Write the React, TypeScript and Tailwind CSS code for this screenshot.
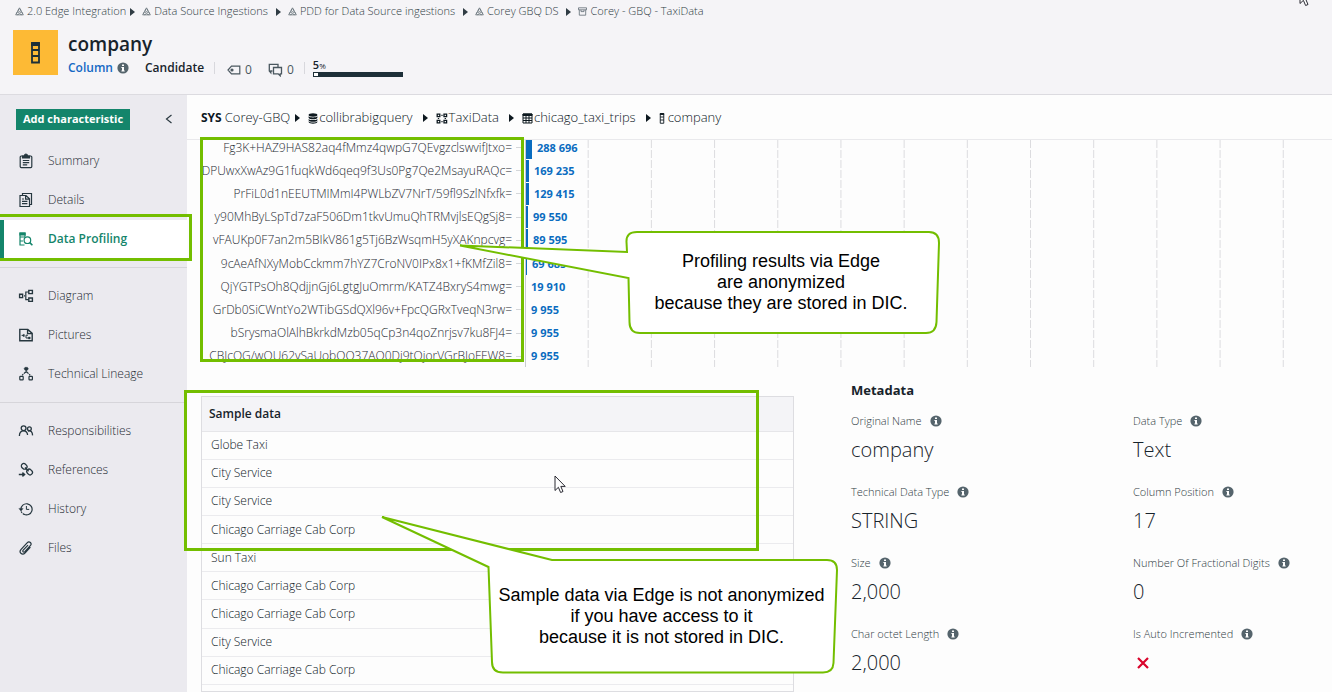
import type { ReactNode } from 'react'
import clsx from 'clsx'

/* ---------- data ---------- */

const profile = [
    { hash: 'Fg3K+HAZ9HAS82aq4fMmz4qwpG7QEvgzclswvifJtxo=', count: 288696 },
    { hash: 'DPUwxXwAz9G1fuqkWd6qeq9f3Us0Pg7Qe2MsayuRAQc=', count: 169235 },
    { hash: 'PrFiL0d1nEEUTMIMmI4PWLbZV7NrT/59fl9SzlNfxfk=', count: 129415 },
    { hash: 'y90MhByLSpTd7zaF506Dm1tkvUmuQhTRMvjlsEQgSj8=', count: 99550 },
    { hash: 'vFAUKp0F7an2m5BIkV861g5Tj6BzWsqmH5yXAKnpcvg=', count: 89595 },
    { hash: '9cAeAfNXyMobCckmm7hYZ7CroNV0IPx8x1+fKMfZil8=', count: 69685 },
    { hash: 'QjYGTPsOh8QdjjnGj6LgtgJuOmrm/KATZ4BxryS4mwg=', count: 19910 },
    { hash: 'GrDb0SiCWntYo2WTibGSdQXl96v+FpcQGRxTveqN3rw=', count: 9955 },
    { hash: 'bSrysmaOlAlhBkrkdMzb05qCp3n4qoZnrjsv7ku8FJ4=', count: 9955 },
    { hash: 'CBJcQG/wQU62vSaUobQO37AQ0Dj9tQjorVGrBJoFEW8=', count: 9955 },
]

const samples = [
    'Globe Taxi',
    'City Service',
    'City Service',
    'Chicago Carriage Cab Corp',
    'Sun Taxi',
    'Chicago Carriage Cab Corp',
    'Chicago Carriage Cab Corp',
    'City Service',
    'Chicago Carriage Cab Corp',
]

const metadata = [
    { label: 'Original Name', value: 'company' },
    { label: 'Data Type', value: 'Text' },
    { label: 'Technical Data Type', value: 'STRING' },
    { label: 'Column Position', value: '17' },
    { label: 'Size', value: '2,000' },
    { label: 'Number Of Fractional Digits', value: '0' },
    { label: 'Char octet Length', value: '2,000' },
    { label: 'Is Auto Incremented', value: false },
]

const formatCount = (n: number) => String(n).replace(/\B(?=(\d{3})+$)/g, ' ')

/* ---------- icons ---------- */

function Icon({ children, className, size = 16 }: { children: ReactNode; className?: string; size?: number }) {
    return (
        <svg
            viewBox={`0 0 ${size} ${size}`}
            width={size}
            height={size}
            fill="none"
            stroke="currentColor"
            strokeWidth="1.2"
            className={clsx('shrink-0', className)}
            aria-hidden="true"
        >
            {children}
        </svg>
    )
}

const Arrow = ({ className }: { className?: string }) => (
    <svg viewBox="0 0 5 8" width="5" height="8" fill="currentColor" className={clsx('shrink-0', className)} aria-hidden="true">
        <path d="M0 0 5 4 0 8z" />
    </svg>
)

const InfoIcon = () => (
    <svg viewBox="0 0 12 12" width="12" height="12" className="shrink-0" aria-hidden="true">
        <circle cx="6" cy="6" r="5.6" fill="#55646c" />
        <path d="M5 2.4h2v1.7H5zM4.4 5H7v3.6h.7v1H4.4v-1H5V6h-.6z" fill="#fff" />
    </svg>
)

const CommunityIcon = () => (
    <svg viewBox="0 0 9 9" width="9" height="9" fill="none" stroke="#5f6b73" strokeWidth=".7" className="shrink-0" aria-hidden="true">
        <path d="M4.5.8 8.4 7.9H.6z" />
        <circle cx="4.5" cy="3.2" r="1.3" />
        <circle cx="2.8" cy="6.4" r="1.3" />
        <circle cx="6.2" cy="6.4" r="1.3" />
    </svg>
)

const DomainIcon = () => (
    <svg viewBox="0 0 9 9" width="9" height="9" fill="none" stroke="#5f6b73" strokeWidth=".8" className="shrink-0" aria-hidden="true">
        <path d="M.5.8h8v2h-8zM1.3 2.8v5.4h6.4V2.8M3 3v1.6h3V3" />
    </svg>
)

const icons = {
    summary: (
        <Icon>
            <rect x="2.2" y="3" width="11.6" height="11.6" rx="1" />
            <path d="M4.5 5V3h2c0-1.2.6-2 1.5-2s1.5.8 1.5 2h2v2z" fill="currentColor" />
            <path d="M4.8 7.5h6.4M4.8 9.7h6.4M4.8 11.9h4.4" />
        </Icon>
    ),
    details: (
        <Icon>
            <path d="M4.5 3V1.5h9v11H12" />
            <path d="M2 3.5h6l3.5 3.3v7.7H2zM7.6 3.6v3.6h3.8M4 7h2M4 9.3h5.4M4 11.7h5.4" />
        </Icon>
    ),
    profiling: (
        <Icon>
            <path d="M6.5 14H2V2h5v3.5M2 6h5M2 10h3" />
            <path d="M2 2h5v2H2z" fill="currentColor" />
            <circle cx="9.4" cy="9.2" r="3.3" />
            <path d="m11.8 11.6 2.6 2.7" strokeWidth="1.6" />
        </Icon>
    ),
    diagram: (
        <Icon>
            <path d="M1.6 6.2h3v3.4h-3zM10.8 2.4h3.6v3.2h-3.6zM10.8 10h3.6v3.4h-3.6z" strokeWidth="1.4" />
            <path d="M6 7.9h1M10.6 4H7.8v7.7h2.8" />
        </Icon>
    ),
    pictures: (
        <Icon>
            <path d="M1.8 2.4h8l4.4 4v7.4H1.8zM9.6 2.6v4h4.4" strokeWidth="1.4" />
            <path d="M3.6 8.4h2.2M8 8.2v2.8h3M8 8.2h2" strokeWidth="1" />
            <path d="M5 7.4h1.4v2H5zM10.4 10h1.8v2h-1.8z" fill="currentColor" strokeWidth=".4" />
        </Icon>
    ),
    lineage: (
        <Icon>
            <path d="M6 2.7 7 1.3h2.4l1 1.4-1 1.5H7z" fill="currentColor" strokeWidth=".4" />
            <path d="M8.2 4v2.4M7.6 6 4.2 9.2M8.8 6l3.4 3.2" strokeDasharray="2.4 .8" />
            <rect x="1.8" y="10.4" width="3.4" height="3.4" rx=".6" />
            <rect x="11" y="10.4" width="3.4" height="3.4" rx=".6" />
        </Icon>
    ),
    people: (
        <Icon>
            <circle cx="5.6" cy="5.2" r="2.4" strokeWidth="1.3" />
            <path d="M1.4 13c0-3.2 1.8-5.2 4.2-5.2S9.4 9.6 9.6 12" strokeWidth="1.3" />
            <circle cx="11.4" cy="5.8" r="1.9" strokeWidth="1.3" />
            <path d="M10 8.2c2.8-1.2 4.4.6 4.6 4.2" strokeWidth="1.3" />
        </Icon>
    ),
    references: (
        <Icon>
            <rect x="3.8" y="1.4" width="4.8" height="6" rx="2.4" transform="rotate(-45 6.2 4.4)" strokeWidth="1.3" />
            <rect x="9.2" y="7" width="4.8" height="6" rx="2.4" transform="rotate(-45 11.6 10)" strokeWidth="1.3" />
            <path d="m7 5.6 3.6 3.6M.8 12.5h5.4M4.4 10.6l2.2 1.9-2.2 1.9" strokeWidth="1.4" />
        </Icon>
    ),
    history: (
        <Icon>
            <path d="M2.9 8.4a5.6 5.6 0 1 1 3 4.9" />
            <path d="M3.2 10.4a5.6 5.6 0 0 0 3 3" strokeDasharray="1.6 1" />
            <path d="M.8 7.4h4.4L3 10.2z" fill="currentColor" strokeWidth=".3" />
            <path d="M8.4 5v3.4h2.8" strokeWidth="1" />
        </Icon>
    ),
    files: (
        <Icon>
            <path d="M12.4 7.2 7.2 12.8c-1.4 1.5-3.2 1.5-4.3.5-1.1-1.1-1-2.7.2-4l6-6.5c1-1 2.4-1.1 3.3-.3.9.9.9 2.1-.1 3.2l-5.5 5.9c-.6.6-1.3.6-1.7.2-.5-.5-.4-1.1.1-1.7L10 5.2" />
        </Icon>
    ),
}

const DatabaseIcon = () => (
    <svg viewBox="0 0 10 11" width="10" height="11" fill="currentColor" className="shrink-0" aria-hidden="true">
        <ellipse cx="5" cy="2" rx="4.4" ry="1.7" />
        <path d="M.6 3.2c1 1.6 7.8 1.6 8.8 0v1.6c-.6 2-8.2 2-8.8 0zM.6 5.9c1 1.6 7.8 1.6 8.8 0v1.3c-.6 2-8.2 2-8.8 0zM.6 8.3c1 1.6 7.8 1.6 8.8 0v.8c-.6 2.2-8.2 2.2-8.8 0z" />
    </svg>
)

const SchemaIcon = () => (
    <svg viewBox="0 0 12 11" width="12" height="11" fill="none" stroke="currentColor" strokeWidth="1.3" className="shrink-0" aria-hidden="true">
        <path d="M1.2 1.2h2.6v2.4H1.2zM8 1.2h2.6v2.4H8zM1.2 7.4h2.6v2.4H1.2zM8 7.4h2.6v2.4H8z" />
        <path d="M5.4 2.4h1.2M5.4 8.6h1.2M2.5 4.9v1.2M9.3 4.9v1.2" />
    </svg>
)

const TableIcon = () => (
    <svg viewBox="0 0 11 11" width="11" height="11" fill="none" stroke="currentColor" className="shrink-0" aria-hidden="true">
        <path d="M1 1h9v9H1zM1 5h9M1 7.5h9M4 2v8M7 2v8" />
        <path d="M1 1h9v1.5H1z" fill="currentColor" />
    </svg>
)

const ColumnIcon = ({ className }: { className?: string }) => (
    <svg viewBox="0 0 9 22" fill="none" stroke="currentColor" strokeWidth="1.8" className={clsx('shrink-0', className)} aria-hidden="true">
        <path d="M1 1.5h7v19H1zM1 8h7M1 14h7" />
        <path d="M1 1h7v2H1z" fill="currentColor" />
    </svg>
)

/* ---------- header ---------- */

const crumbs = [
    { text: '2.0 Edge Integration', icon: <CommunityIcon /> },
    { text: 'Data Source Ingestions', icon: <CommunityIcon /> },
    { text: 'PDD for Data Source ingestions', icon: <CommunityIcon /> },
    { text: 'Corey GBQ DS', icon: <CommunityIcon /> },
    { text: 'Corey - GBQ - TaxiData', icon: <DomainIcon /> },
]

function Header() {
    return (
        <header className="h-[95px] shrink-0 border-b border-[#dcdbe0] bg-[#f5f4f7]">
            <nav className="flex h-[23px] items-center pl-[15px] text-[11px] font-light text-[#303c44]">
                {crumbs.map((crumb, i) => (
                    <div key={crumb.text} className="flex items-center">
                        {i > 0 && <Arrow className={clsx('mr-[7px]', i === 1 ? 'ml-1' : 'ml-2')} />}
                        <a href="#" className="flex items-center gap-[3px] whitespace-nowrap">
                            {crumb.icon}
                            {crumb.text}
                        </a>
                    </div>
                ))}
            </nav>
            <div className="flex gap-2.5 pt-[7px] pl-[13px]">
                <div className="flex size-[45px] items-center justify-center bg-[#fdba35] text-[#1d2f38]">
                    <ColumnIcon className="h-[22px] w-[9px]" />
                </div>
                <div>
                    <h1 className="text-[19px] leading-7 font-semibold text-[#17232b]">company</h1>
                    <div className="flex h-5 items-center text-xs font-semibold text-[#17232b]">
                        <a href="#" className="mr-1 text-[#1468c4]">Column</a>
                        <InfoIcon />
                        <span className="ml-4">Candidate</span>
                        <span className="ml-2.5 h-3 w-px bg-[#d8d8dd]" />
                        <span className="ml-3 flex items-center gap-1 pt-1 font-normal text-[#4a575f]">
                            <svg viewBox="0 0 14 10" width="14" height="10" fill="none" stroke="currentColor" strokeWidth="1.2" aria-hidden="true">
                                <path d="M4.5 1.2h8.3v7.6H4.5L1 5z" />
                                <circle cx="5" cy="5" r="1" fill="currentColor" />
                            </svg>
                            0
                        </span>
                        <span className="ml-4 flex items-center gap-1 pt-1 font-normal text-[#4a575f]">
                            <svg viewBox="0 0 15 14" width="15" height="14" fill="none" stroke="currentColor" strokeWidth="1.3" aria-hidden="true">
                                <path d="M4.5 8H2.8v1.8L1.3 8V1.3H10V4" />
                                <path d="M5.5 4.5h8v6.3h-1.3v2l-2-2H5.5z" />
                            </svg>
                            0
                        </span>
                        <span className="ml-2.5 h-3 w-px bg-[#d8d8dd]" />
                        <div className="ml-2 w-[90px]">
                            <div className="text-[11px] leading-3">
                                5<span className="text-[8px] font-normal">%</span>
                            </div>
                            <div className="h-[5px] border border-[#1d2f38] bg-[#1d2f38]">
                                <div className="h-full bg-white" style={{ width: '5%' }} />
                            </div>
                        </div>
                    </div>
                </div>
            </div>
        </header>
    )
}

/* ---------- sidebar ---------- */

const menu = [
    [
        { label: 'Summary', icon: icons.summary },
        { label: 'Details', icon: icons.details },
        { label: 'Data Profiling', icon: icons.profiling, active: true },
    ],
    [
        { label: 'Diagram', icon: icons.diagram },
        { label: 'Pictures', icon: icons.pictures },
        { label: 'Technical Lineage', icon: icons.lineage },
    ],
    [
        { label: 'Responsibilities', icon: icons.people },
        { label: 'References', icon: icons.references },
        { label: 'History', icon: icons.history },
        { label: 'Files', icon: icons.files },
    ],
]

function Sidebar() {
    return (
        <aside className="w-[187px] shrink-0 bg-[#ebeaef]">
            <div className="flex h-[47px] items-center justify-between pt-0.5 pr-3 pl-4">
                <button className="h-[21px] bg-[#14856b] px-[7px] text-[11px] font-bold whitespace-nowrap text-white">Add characteristic</button>
                <button aria-label="Collapse" className="text-[#2b3940]">
                    <svg viewBox="0 0 12 12" width="12" height="12" fill="none" stroke="currentColor" strokeWidth="1.2" aria-hidden="true">
                        <path d="M8.5 1 3.5 5l5 4" />
                    </svg>
                </button>
            </div>
            {menu.map((group, i) => (
                <ul key={i} className={clsx('flex flex-col gap-px', i > 0 && 'mt-[9px] border-t border-[#d6d5da] pt-[9px]')}>
                    {group.map((item: { label: string; icon: ReactNode; active?: boolean }) => (
                        <li key={item.label}>
                            <a
                                href="#"
                                className={clsx(
                                    'flex h-[38px] items-center gap-3.5 border-l-4 pl-[14px] text-xs',
                                    item.active ? 'border-[#14856b] bg-white font-semibold text-[#14856b]' : 'border-transparent font-light text-[#1f2b33]'
                                )}
                            >
                                <span className={item.active ? '' : 'text-[#26373f]'}>{item.icon}</span>
                                {item.label}
                            </a>
                        </li>
                    ))}
                </ul>
            ))}
        </aside>
    )
}

/* ---------- main ---------- */

const path = [
    { text: 'collibrabigquery', icon: <DatabaseIcon /> },
    { text: 'TaxiData', icon: <SchemaIcon /> },
    { text: 'chicago_taxi_trips', icon: <TableIcon /> },
    { text: 'company', icon: <ColumnIcon className="mr-0.5 h-[11px] w-[6px]" /> },
]

function PathBar() {
    return (
        <nav className="flex h-[45px] items-center border-b border-[#e9e9ec] pt-0.5 pl-3.5 text-[13px] font-light text-[#0d181f]">
            <span className="mr-[3px] text-xs font-bold">SYS</span>
            <a href="#">Corey-GBQ</a>
            {path.map((part, i) => (
                <div key={part.text} className="flex items-center">
                    <Arrow className={clsx('mr-2', i === 0 ? 'ml-[5px]' : 'ml-2.5')} />
                    <a href="#" className="flex items-center gap-px">
                        {part.icon}
                        {part.text}
                    </a>
                </div>
            ))}
        </nav>
    )
}

function Chart() {
    return (
        <section className="relative h-[227px] shrink-0 overflow-hidden">
            <div className="absolute inset-y-0 right-0 left-[338px]">
                <svg width="100%" height="100%" aria-hidden="true">
                    <line x1="0" x2="0" y1="0" y2="100%" stroke="#c9ccd0" strokeWidth="2" />
                    {Array.from({ length: 12 }, (_, i) => {
                        const x = `${(i + 1) * 7.83}%`
                        return <line key={i} x1={x} x2={x} y1="0" y2="100%" stroke="#dcdcdf" strokeDasharray="8 2" />
                    })}
                </svg>
            </div>
            <ol className="relative -mt-1 grid h-[232px] auto-rows-fr">
                {profile.map((row, i) => (
                    <li key={i} className="flex items-center">
                        <span className="w-[325px] shrink-0 text-right text-xs leading-3 font-light whitespace-nowrap text-[#1f2b33]">{row.hash}</span>
                        <span className="mx-1 h-px w-[6px] bg-[#d5d7da]" />
                        <span className="h-[22px] bg-[#0a6cc0]" style={{ width: Math.round(row.count / 50000) }} />
                        <span className="ml-[5px] text-[11px] leading-3 font-bold text-[#0a6cc0]">{formatCount(row.count)}</span>
                    </li>
                ))}
            </ol>
        </section>
    )
}

function SampleTable() {
    return (
        <div className="flex w-[593px] shrink-0 flex-col border border-[#dddde1]">
            <table className="h-[288px] w-full shrink-0 border-collapse text-left text-xs">
                <thead>
                    <tr className="h-[34px] border-b border-[#e6e6e9] bg-[#f4f4f7]">
                        <th className="px-[7px] py-0 font-semibold text-[#17232b]">Sample data</th>
                    </tr>
                </thead>
                <tbody className="font-light text-[#0d181f]">
                    {samples.map((name, i) => (
                        <tr key={i} className="border-b border-[#ebebee]">
                            <td className="px-[9px] py-0">{name}</td>
                        </tr>
                    ))}
                </tbody>
            </table>
        </div>
    )
}

function Metadata() {
    return (
        <section className="min-w-0 flex-1">
            <h2 className="-mt-4 text-[13px] leading-5 font-bold text-[#17232b]">Metadata</h2>
            <dl className="mt-3 grid grid-cols-[282px_1fr]">
                {metadata.map(item => (
                    <div key={item.label} className="h-[71px]">
                        <dt className="flex h-[18px] items-center gap-2 text-[11px] font-light whitespace-nowrap text-[#303c44]">
                            {item.label}
                            <InfoIcon />
                        </dt>
                        <dd className="flex h-10 items-center text-xl font-light text-[#17232b]">
                            {item.value || (
                                <svg viewBox="0 0 12 12" width="12" height="12" stroke="#d9042b" strokeWidth="2.2" className="ml-1" role="img" aria-label="No">
                                    <path d="m1 1 10 10M11 1 1 11" />
                                </svg>
                            )}
                        </dd>
                    </div>
                ))}
            </dl>
        </section>
    )
}

/* ---------- annotations drawn over the page ---------- */

const Pointer = () => (
    <svg viewBox="0 0 12 19" width="12" height="19" fill="#fff" stroke="#2a2a33" aria-hidden="true">
        <path d="M1 1v14.5l3.4-3.2 2.2 5.2 2.4-1-2.2-5.100h4.4z" />
    </svg>
)

function Annotations() {
    return (
        <div className="pointer-events-none absolute inset-0 overflow-hidden">
            <div className="absolute top-[137px] left-[200px] h-[225px] w-[324px] border-3 border-[#73be00]" />
            <div className="absolute top-[214px] -left-1 h-[47px] w-[196px] border-3 border-[#73be00]" />
            <div className="absolute top-[390px] left-[184px] h-[161px] w-[575px] border-3 border-[#73be00]" />

            <div className="absolute top-[230px] left-[458px] w-[484px]">
                <svg viewBox="458 230 484 106" width="484" height="106" fill="#fff" stroke="#73be00" strokeWidth="2" aria-hidden="true">
                    <path d="M460 245.5 627 252 626.5 242Q626 232 637 232H929Q939 232 939 243L936.5 322Q936 333 926 333H640Q629.5 333 629.5 322L628.5 278Z" />
                </svg>
                <p className="absolute top-[21px] right-0 w-[322px] text-center font-['Liberation_Sans',sans-serif] text-lg leading-[21px] text-black">
                    Profiling results via Edge
                    <br />
                    are anonymized
                    <br />
                    because they are stored in DIC.
                </p>
            </div>

            <div className="absolute top-[514px] left-[380px] w-[460px]">
                <svg viewBox="380 514 460 162" width="460" height="162" fill="#fff" stroke="#73be00" strokeWidth="2" aria-hidden="true">
                    <path d="M382 517 552 560H827Q837 560 837 570L833.5 663Q833 672.5 823 672.5H503Q492 672.5 492 662L488.5 567Z" />
                </svg>
                <p className="absolute top-[71px] right-0 w-[357px] text-center font-['Liberation_Sans',sans-serif] text-lg leading-[21px] text-black">
                    Sample data via Edge is not anonymized
                    <br />
                    if you have access to it
                    <br />
                    because it is not stored in DIC.
                </p>
            </div>

            <div className="absolute top-[475px] left-[554px]">
                <Pointer />
            </div>
            <div className="absolute -top-3 left-[1299px]">
                <Pointer />
            </div>
        </div>
    )
}

export default function App() {
    return (
        <div className="relative flex h-screen flex-col overflow-hidden bg-[#fdfdfd] font-['Open_Sans',sans-serif]">
            <Header />
            <div className="flex min-h-0 flex-1">
                <Sidebar />
                <main className="flex min-w-0 flex-1 flex-col">
                    <PathBar />
                    <Chart />
                    <div className="mt-[29px] flex min-h-0 flex-1 gap-[57px] pl-3.5">
                        <SampleTable />
                        <Metadata />
                    </div>
                </main>
            </div>
            <Annotations />
        </div>
    )
}
